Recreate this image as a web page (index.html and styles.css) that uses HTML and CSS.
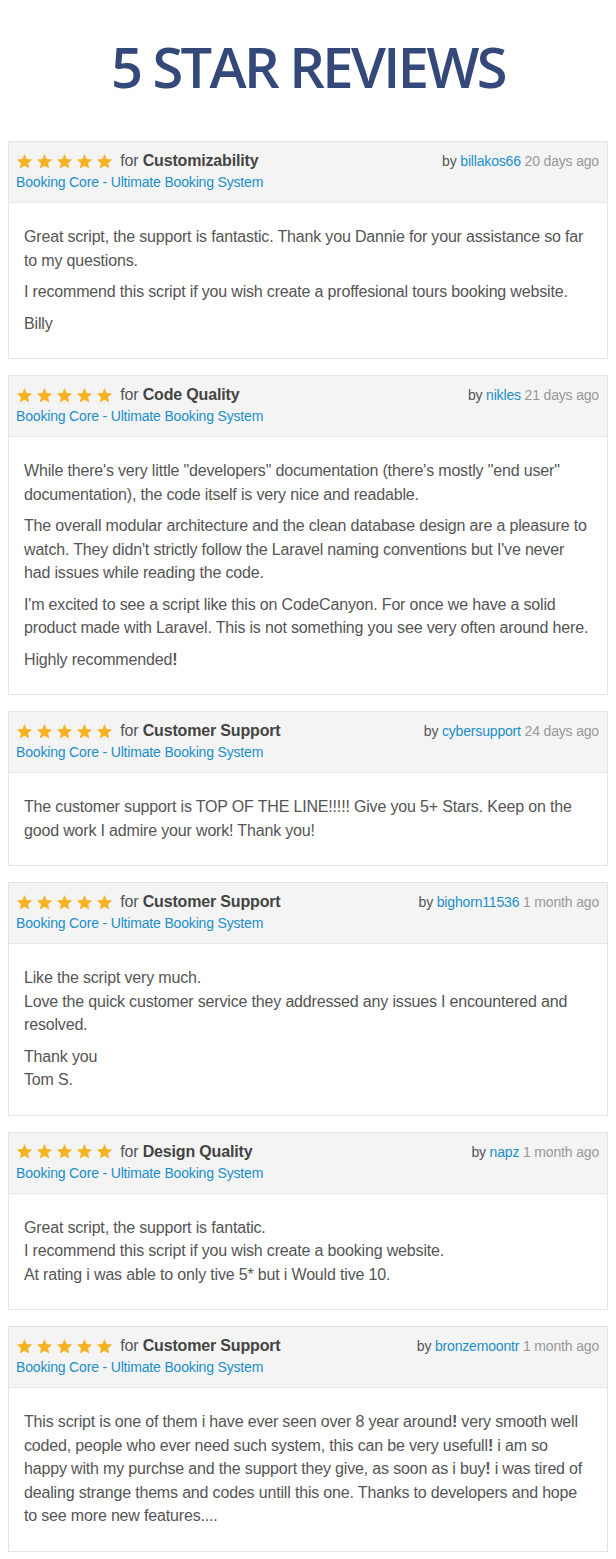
FILE: index.html
```html
<!DOCTYPE html>
<html>
<head>
<meta charset="utf-8">
<link rel="stylesheet" href="styles.css">
</head>
<body>
<h1 class="title">5 STAR REVIEWS</h1>
<div class="reviews">

<div class="card">
  <div class="head">
    <div class="left">
      <div class="rating"><span class="stars"><svg viewBox="0 0 24 24"><path d="M12 1.5l3.1 7.1 7.7.7-5.8 5.1 1.7 7.6L12 18l-6.7 4 1.7-7.6-5.8-5.1 7.7-.7z"/></svg><svg viewBox="0 0 24 24"><path d="M12 1.5l3.1 7.1 7.7.7-5.8 5.1 1.7 7.6L12 18l-6.7 4 1.7-7.6-5.8-5.1 7.7-.7z"/></svg><svg viewBox="0 0 24 24"><path d="M12 1.5l3.1 7.1 7.7.7-5.8 5.1 1.7 7.6L12 18l-6.7 4 1.7-7.6-5.8-5.1 7.7-.7z"/></svg><svg viewBox="0 0 24 24"><path d="M12 1.5l3.1 7.1 7.7.7-5.8 5.1 1.7 7.6L12 18l-6.7 4 1.7-7.6-5.8-5.1 7.7-.7z"/></svg><svg viewBox="0 0 24 24"><path d="M12 1.5l3.1 7.1 7.7.7-5.8 5.1 1.7 7.6L12 18l-6.7 4 1.7-7.6-5.8-5.1 7.7-.7z"/></svg></span> for <b>Customizability</b></div>
      <a class="item">Booking Core - Ultimate Booking System</a>
    </div>
    <div class="by">by <a class="user">billakos66</a> <span class="ago">20 days ago</span></div>
  </div>
  <div class="body">
    <p>Great script, the support is fantastic. Thank you Dannie for your assistance so far to my questions.</p>
    <p>I recommend this script if you wish create a proffesional tours booking website.</p>
    <p>Billy</p>
  </div>
</div>

<div class="card">
  <div class="head">
    <div class="left">
      <div class="rating"><span class="stars"><svg viewBox="0 0 24 24"><path d="M12 1.5l3.1 7.1 7.7.7-5.8 5.1 1.7 7.6L12 18l-6.7 4 1.7-7.6-5.8-5.1 7.7-.7z"/></svg><svg viewBox="0 0 24 24"><path d="M12 1.5l3.1 7.1 7.7.7-5.8 5.1 1.7 7.6L12 18l-6.7 4 1.7-7.6-5.8-5.1 7.7-.7z"/></svg><svg viewBox="0 0 24 24"><path d="M12 1.5l3.1 7.1 7.7.7-5.8 5.1 1.7 7.6L12 18l-6.7 4 1.7-7.6-5.8-5.1 7.7-.7z"/></svg><svg viewBox="0 0 24 24"><path d="M12 1.5l3.1 7.1 7.7.7-5.8 5.1 1.7 7.6L12 18l-6.7 4 1.7-7.6-5.8-5.1 7.7-.7z"/></svg><svg viewBox="0 0 24 24"><path d="M12 1.5l3.1 7.1 7.7.7-5.8 5.1 1.7 7.6L12 18l-6.7 4 1.7-7.6-5.8-5.1 7.7-.7z"/></svg></span> for <b>Code Quality</b></div>
      <a class="item">Booking Core - Ultimate Booking System</a>
    </div>
    <div class="by">by <a class="user">nikles</a> <span class="ago">21 days ago</span></div>
  </div>
  <div class="body">
    <p>While there's very little "developers" documentation (there's mostly "end user" documentation), the code itself is very nice and readable.</p>
    <p>The overall modular architecture and the clean database design are a pleasure to watch. They didn't strictly follow the Laravel naming conventions but I've never had issues while reading the code.</p>
    <p>I'm excited to see a script like this on CodeCanyon. For once we have a solid product made with Laravel. This is not something you see very often around here.</p>
    <p>Highly recommended<strong>!</strong></p>
  </div>
</div>

<div class="card">
  <div class="head">
    <div class="left">
      <div class="rating"><span class="stars"><svg viewBox="0 0 24 24"><path d="M12 1.5l3.1 7.1 7.7.7-5.8 5.1 1.7 7.6L12 18l-6.7 4 1.7-7.6-5.8-5.1 7.7-.7z"/></svg><svg viewBox="0 0 24 24"><path d="M12 1.5l3.1 7.1 7.7.7-5.8 5.1 1.7 7.6L12 18l-6.7 4 1.7-7.6-5.8-5.1 7.7-.7z"/></svg><svg viewBox="0 0 24 24"><path d="M12 1.5l3.1 7.1 7.7.7-5.8 5.1 1.7 7.6L12 18l-6.7 4 1.7-7.6-5.8-5.1 7.7-.7z"/></svg><svg viewBox="0 0 24 24"><path d="M12 1.5l3.1 7.1 7.7.7-5.8 5.1 1.7 7.6L12 18l-6.7 4 1.7-7.6-5.8-5.1 7.7-.7z"/></svg><svg viewBox="0 0 24 24"><path d="M12 1.5l3.1 7.1 7.7.7-5.8 5.1 1.7 7.6L12 18l-6.7 4 1.7-7.6-5.8-5.1 7.7-.7z"/></svg></span> for <b>Customer Support</b></div>
      <a class="item">Booking Core - Ultimate Booking System</a>
    </div>
    <div class="by">by <a class="user">cybersupport</a> <span class="ago">24 days ago</span></div>
  </div>
  <div class="body">
    <p>The customer support is TOP OF THE LINE!!!!! Give you 5+ Stars. Keep on the good work I admire your work! Thank you!</p>
  </div>
</div>

<div class="card">
  <div class="head">
    <div class="left">
      <div class="rating"><span class="stars"><svg viewBox="0 0 24 24"><path d="M12 1.5l3.1 7.1 7.7.7-5.8 5.1 1.7 7.6L12 18l-6.7 4 1.7-7.6-5.8-5.1 7.7-.7z"/></svg><svg viewBox="0 0 24 24"><path d="M12 1.5l3.1 7.1 7.7.7-5.8 5.1 1.7 7.6L12 18l-6.7 4 1.7-7.6-5.8-5.1 7.7-.7z"/></svg><svg viewBox="0 0 24 24"><path d="M12 1.5l3.1 7.1 7.7.7-5.8 5.1 1.7 7.6L12 18l-6.7 4 1.7-7.6-5.8-5.1 7.7-.7z"/></svg><svg viewBox="0 0 24 24"><path d="M12 1.5l3.1 7.1 7.7.7-5.8 5.1 1.7 7.6L12 18l-6.7 4 1.7-7.6-5.8-5.1 7.7-.7z"/></svg><svg viewBox="0 0 24 24"><path d="M12 1.5l3.1 7.1 7.7.7-5.8 5.1 1.7 7.6L12 18l-6.7 4 1.7-7.6-5.8-5.1 7.7-.7z"/></svg></span> for <b>Customer Support</b></div>
      <a class="item">Booking Core - Ultimate Booking System</a>
    </div>
    <div class="by">by <a class="user">bighorn11536</a> <span class="ago">1 month ago</span></div>
  </div>
  <div class="body">
    <p>Like the script very much.<br>Love the quick customer service they addressed any issues I encountered and resolved.</p>
    <p>Thank you<br>Tom S.</p>
  </div>
</div>

<div class="card">
  <div class="head">
    <div class="left">
      <div class="rating"><span class="stars"><svg viewBox="0 0 24 24"><path d="M12 1.5l3.1 7.1 7.7.7-5.8 5.1 1.7 7.6L12 18l-6.7 4 1.7-7.6-5.8-5.1 7.7-.7z"/></svg><svg viewBox="0 0 24 24"><path d="M12 1.5l3.1 7.1 7.7.7-5.8 5.1 1.7 7.6L12 18l-6.7 4 1.7-7.6-5.8-5.1 7.7-.7z"/></svg><svg viewBox="0 0 24 24"><path d="M12 1.5l3.1 7.1 7.7.7-5.8 5.1 1.7 7.6L12 18l-6.7 4 1.7-7.6-5.8-5.1 7.7-.7z"/></svg><svg viewBox="0 0 24 24"><path d="M12 1.5l3.1 7.1 7.7.7-5.8 5.1 1.7 7.6L12 18l-6.7 4 1.7-7.6-5.8-5.1 7.7-.7z"/></svg><svg viewBox="0 0 24 24"><path d="M12 1.5l3.1 7.1 7.7.7-5.8 5.1 1.7 7.6L12 18l-6.7 4 1.7-7.6-5.8-5.1 7.7-.7z"/></svg></span> for <b>Design Quality</b></div>
      <a class="item">Booking Core - Ultimate Booking System</a>
    </div>
    <div class="by">by <a class="user">napz</a> <span class="ago">1 month ago</span></div>
  </div>
  <div class="body">
    <p>Great script, the support is fantatic.<br>I recommend this script if you wish create a booking website.<br>At rating i was able to only tive 5* but i Would tive 10.</p>
  </div>
</div>

<div class="card">
  <div class="head">
    <div class="left">
      <div class="rating"><span class="stars"><svg viewBox="0 0 24 24"><path d="M12 1.5l3.1 7.1 7.7.7-5.8 5.1 1.7 7.6L12 18l-6.7 4 1.7-7.6-5.8-5.1 7.7-.7z"/></svg><svg viewBox="0 0 24 24"><path d="M12 1.5l3.1 7.1 7.7.7-5.8 5.1 1.7 7.6L12 18l-6.7 4 1.7-7.6-5.8-5.1 7.7-.7z"/></svg><svg viewBox="0 0 24 24"><path d="M12 1.5l3.1 7.1 7.7.7-5.8 5.1 1.7 7.6L12 18l-6.7 4 1.7-7.6-5.8-5.1 7.7-.7z"/></svg><svg viewBox="0 0 24 24"><path d="M12 1.5l3.1 7.1 7.7.7-5.8 5.1 1.7 7.6L12 18l-6.7 4 1.7-7.6-5.8-5.1 7.7-.7z"/></svg><svg viewBox="0 0 24 24"><path d="M12 1.5l3.1 7.1 7.7.7-5.8 5.1 1.7 7.6L12 18l-6.7 4 1.7-7.6-5.8-5.1 7.7-.7z"/></svg></span> for <b>Customer Support</b></div>
      <a class="item">Booking Core - Ultimate Booking System</a>
    </div>
    <div class="by">by <a class="user">bronzemoontr</a> <span class="ago">1 month ago</span></div>
  </div>
  <div class="body">
    <p>This script is one of them i have ever seen over 8 year around<strong>!</strong> very smooth well coded, people who ever need such system, this can be very usefull<strong>!</strong> i am so happy with my purchse and the support they give, as soon as i buy<strong>!</strong> i was tired of dealing strange thems and codes untill this one. Thanks to developers and hope to see more new features....</p>
  </div>
</div>

</div>
</body>
</html>
```
FILE: styles.css
```css
html, body {
  margin: 0;
  padding: 0;
  background: #fff;
}
body {
  font-family: "Liberation Sans", Arial, sans-serif;
  color: #555;
  letter-spacing: -0.17px;
}
.title {
  margin: 0;
  padding: 29px 0 38px;
  text-align: center;
  font-family: "Open Sans", sans-serif;
  font-weight: 600;
  font-size: 56px;
  line-height: 74px;
  color: #34497a;
  letter-spacing: -2.6px;
}
.reviews {
  display: flex;
  flex-direction: column;
  gap: 16px;
  padding: 0 8px 10px 8px;
}
.card {
  border: 1px solid #e2e4e8;
  background: #fff;
}
.head {
  display: flex;
  justify-content: space-between;
  align-items: flex-start;
  background: #f4f4f4;
  border-bottom: 1px solid #e6e8ec;
  padding: 8px 8px 9px 7px;
  height: 43px;
}
.rating {
  display: flex;
  align-items: center;
  font-size: 16px;
  line-height: 22px;
  color: #555;
  white-space: pre;
}
.rating b {
  color: #444;
}
.stars {
  display: inline-flex;
  gap: 3px;
  margin-right: 3px;
}
.stars svg {
  width: 17px;
  height: 17px;
  fill: #f5b324;
}
.item {
  display: block;
  font-size: 14px;
  line-height: 20px;
  color: #1a8fc9;
}
.by {
  font-size: 14px;
  line-height: 20px;
  color: #555;
  padding-top: 1px;
}
.user {
  color: #1a8fc9;
}
.ago {
  color: #999;
}
.body {
  padding: 22px 18px 23px 15px;
}
.body p {
  margin: 0 0 8px 0;
  font-size: 16px;
  line-height: 23.5px;
}
.body p:last-child {
  margin-bottom: 0;
}
.body strong {
  font-weight: bold;
}
```
